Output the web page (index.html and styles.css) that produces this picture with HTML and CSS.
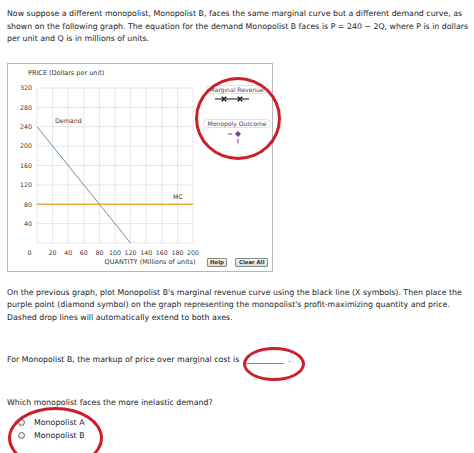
FILE: index.html
```html
<!DOCTYPE html>
<html>
<head>
<meta charset="utf-8">
<link rel="stylesheet" href="styles.css">
</head>
<body>
<div class="page">
  <p class="intro">Now suppose a different monopolist, Monopolist B, faces the same marginal curve but a different demand curve, as<br>shown on the following graph. The equation for the demand Monopolist B faces is P = 240 &minus; 2Q, where P is in dollars<br>per unit and Q is in millions of units.</p>

  <div class="graph">
    <svg class="chart" width="266" height="209" viewBox="7 63 266 209" xmlns="http://www.w3.org/2000/svg">
      <g class="grid">
        <line x1="37" y1="88" x2="37" y2="243"/>
        <line x1="52.6" y1="88" x2="52.6" y2="243"/>
        <line x1="68.2" y1="88" x2="68.2" y2="243"/>
        <line x1="83.8" y1="88" x2="83.8" y2="243"/>
        <line x1="99.4" y1="88" x2="99.4" y2="243"/>
        <line x1="115" y1="88" x2="115" y2="243"/>
        <line x1="130.6" y1="88" x2="130.6" y2="243"/>
        <line x1="146.2" y1="88" x2="146.2" y2="243"/>
        <line x1="161.8" y1="88" x2="161.8" y2="243"/>
        <line x1="177.4" y1="88" x2="177.4" y2="243"/>
        <line x1="193" y1="88" x2="193" y2="243"/>
        <line x1="37" y1="88" x2="193" y2="88"/>
        <line x1="37" y1="107.4" x2="193" y2="107.4"/>
        <line x1="37" y1="126.75" x2="193" y2="126.75"/>
        <line x1="37" y1="146.1" x2="193" y2="146.1"/>
        <line x1="37" y1="165.5" x2="193" y2="165.5"/>
        <line x1="37" y1="184.9" x2="193" y2="184.9"/>
        <line x1="37" y1="204.25" x2="193" y2="204.25"/>
        <line x1="37" y1="223.6" x2="193" y2="223.6"/>
        <line x1="37" y1="243" x2="193" y2="243"/>
      </g>
      <g class="ylab">
        <text x="32" y="90.3">320</text>
        <text x="32" y="109.7">280</text>
        <text x="32" y="129.1">240</text>
        <text x="32" y="148.4">200</text>
        <text x="32" y="167.8">160</text>
        <text x="32" y="187.2">120</text>
        <text x="32" y="206.6">80</text>
        <text x="32" y="225.9">40</text>
      </g>
      <g class="xlab">
        <text x="29.5" y="254.6">0</text>
        <text x="52.6" y="254.6">20</text>
        <text x="68.2" y="254.6">40</text>
        <text x="83.8" y="254.6">60</text>
        <text x="99.4" y="254.6">80</text>
        <text x="115" y="254.6">100</text>
        <text x="130.6" y="254.6">120</text>
        <text x="146.2" y="254.6">140</text>
        <text x="161.8" y="254.6">160</text>
        <text x="177.4" y="254.6">180</text>
        <text x="193" y="254.6">200</text>
      </g>
      <text class="axis-title" x="28" y="75.3">PRICE (Dollars per unit)</text>
      <text class="axis-title mid" x="150" y="264.3">QUANTITY (Millions of units)</text>
      <line class="mc" x1="37" y1="204.25" x2="193" y2="204.25"/>
      <line class="demand" x1="37" y1="126.75" x2="130.6" y2="243"/>
      <text class="curve-label" x="55" y="123.2">Demand</text>
      <text class="curve-label" x="173" y="199.2">MC</text>

      <rect class="pill" x="206.5" y="85.5" width="60" height="8" rx="4"/>
      <text class="legend" x="236.5" y="91.8">Marginal Revenue</text>
      <line class="mr" x1="215" y1="99" x2="249" y2="99"/>
      <path class="mrx" d="M221.8 96.8 L226.2 101.2 M226.2 96.8 L221.8 101.2 M237.8 96.8 L242.2 101.2 M242.2 96.8 L237.8 101.2"/>

      <rect class="pill" x="203.5" y="119.5" width="67" height="8" rx="4"/>
      <text class="legend" x="237" y="125.8">Monopoly Outcome</text>
      <line class="mo-dash" x1="228" y1="134" x2="232" y2="134"/>
      <line class="mo-dash" x1="238" y1="138.5" x2="238" y2="143.5"/>
      <path class="diamond" d="M238 131 L241 134 L238 137 L235 134 Z"/>
    </svg>
    <div class="buttons">
      <span class="btn">Help</span>
      <span class="btn">Clear All</span>
    </div>
  </div>

  <p class="instructions">On the previous graph, plot Monopolist B's marginal revenue curve using the black line (X symbols). Then place the<br>purple point (diamond symbol) on the graph representing the monopolist's profit-maximizing quantity and price.<br>Dashed drop lines will automatically extend to both axes.</p>

  <p class="markup">For Monopolist B, the markup of price over marginal cost is <span class="blank"></span> <span class="dot">.</span></p>

  <p class="question">Which monopolist faces the more inelastic demand?</p>
  <ul class="options">
    <li><span class="radio"></span>Monopolist A</li>
    <li><span class="radio"></span>Monopolist B</li>
  </ul>

  <div class="ring ring-legend"></div>
  <div class="ring ring-blank"></div>
  <div class="ring ring-radio"></div>
</div>
</body>
</html>
```

FILE: styles.css
```css
html, body {
  margin: 0;
  padding: 0;
  background: #ffffff;
}
body {
  font-family: "DejaVu Sans", Verdana, sans-serif;
  color: #1e1e1e;
  font-size: 7.85px;
}
.page {
  position: relative;
  width: 474px;
  height: 453px;
  overflow: hidden;
  padding: 8px 0 0 7px;
  box-sizing: border-box;
}
p {
  margin: 0;
  line-height: 12.5px;
  white-space: nowrap;
}
.intro {
  margin-bottom: 17px;
}
.graph {
  position: relative;
  width: 266px;
  height: 209px;
  border: 1px solid #b8b8b8;
  box-sizing: border-box;
}
.chart {
  display: block;
  position: absolute;
  left: -1px;
  top: -1px;
}
.grid line {
  stroke: #e0e0e0;
  stroke-width: 0.8;
}
.ylab text, .xlab text, .axis-title, .curve-label, .legend {
  font-family: "DejaVu Sans", Verdana, sans-serif;
  fill: #3a3a3a;
}
.ylab text {
  font-size: 6.3px;
  text-anchor: end;
}
.xlab text {
  font-size: 6.3px;
  text-anchor: middle;
}
.axis-title {
  font-size: 6.5px;
  fill: #333333;
}
.axis-title.mid {
  text-anchor: middle;
}
.curve-label {
  font-size: 6.3px;
  fill: #3a3a3a;
}
.legend {
  font-size: 6.1px;
  text-anchor: middle;
  fill: #4a4a4a;
}
.pill {
  fill: #ffffff;
  stroke: #cccccc;
  stroke-width: 0.6;
}
.mc {
  stroke: #f3a93a;
  stroke-width: 1.4;
}
.demand {
  stroke: #6d8fae;
  stroke-width: 1;
}
.mr {
  stroke: #111111;
  stroke-width: 1;
}
.mrx {
  stroke: #111111;
  stroke-width: 1.4;
  fill: none;
}
.mo-dash {
  stroke: #7d3e96;
  stroke-width: 1;
}
.diamond {
  fill: #7d3e96;
}
.buttons {
  position: absolute;
  right: 4px;
  bottom: 4px;
  display: flex;
  gap: 8px;
}
.btn {
  display: block;
  height: 7px;
  line-height: 7px;
  padding: 0 2.5px;
  font-size: 5.4px;
  font-weight: bold;
  color: #333333;
  border: 0.6px solid #888888;
  border-radius: 1px;
  background: linear-gradient(#fafafa, #d8d8d8);
}
.instructions {
  margin-top: 15px;
}
.markup {
  margin-top: 30px;
}
.blank {
  display: inline-block;
  width: 40px;
  height: 1px;
  border-bottom: 1px solid #888888;
  vertical-align: -2px;
  margin-left: 2px;
}
.dot {
  margin-left: 2px;
}
.question {
  margin-top: 30px;
}
.options {
  list-style: none;
  margin: 7px 0 0 11px;
  padding: 0;
}
.options li {
  display: flex;
  align-items: center;
  height: 13.3px;
  line-height: 13.3px;
}
.radio {
  display: inline-block;
  width: 7px;
  height: 7px;
  border-radius: 50%;
  border: 0.8px solid #666666;
  background: radial-gradient(circle at 40% 35%, #ffffff, #cfcfcf);
  margin-right: 9px;
  box-sizing: border-box;
}
.ring {
  position: absolute;
  border: 3.4px solid #cc1f2b;
  border-radius: 50%;
  box-sizing: border-box;
}
.ring-legend {
  left: 195px;
  top: 77px;
  width: 86px;
  height: 83px;
}
.ring-blank {
  left: 243px;
  top: 347px;
  width: 62px;
  height: 34px;
}
.ring-radio {
  left: 8px;
  top: 407px;
  width: 95px;
  height: 62px;
}
```
